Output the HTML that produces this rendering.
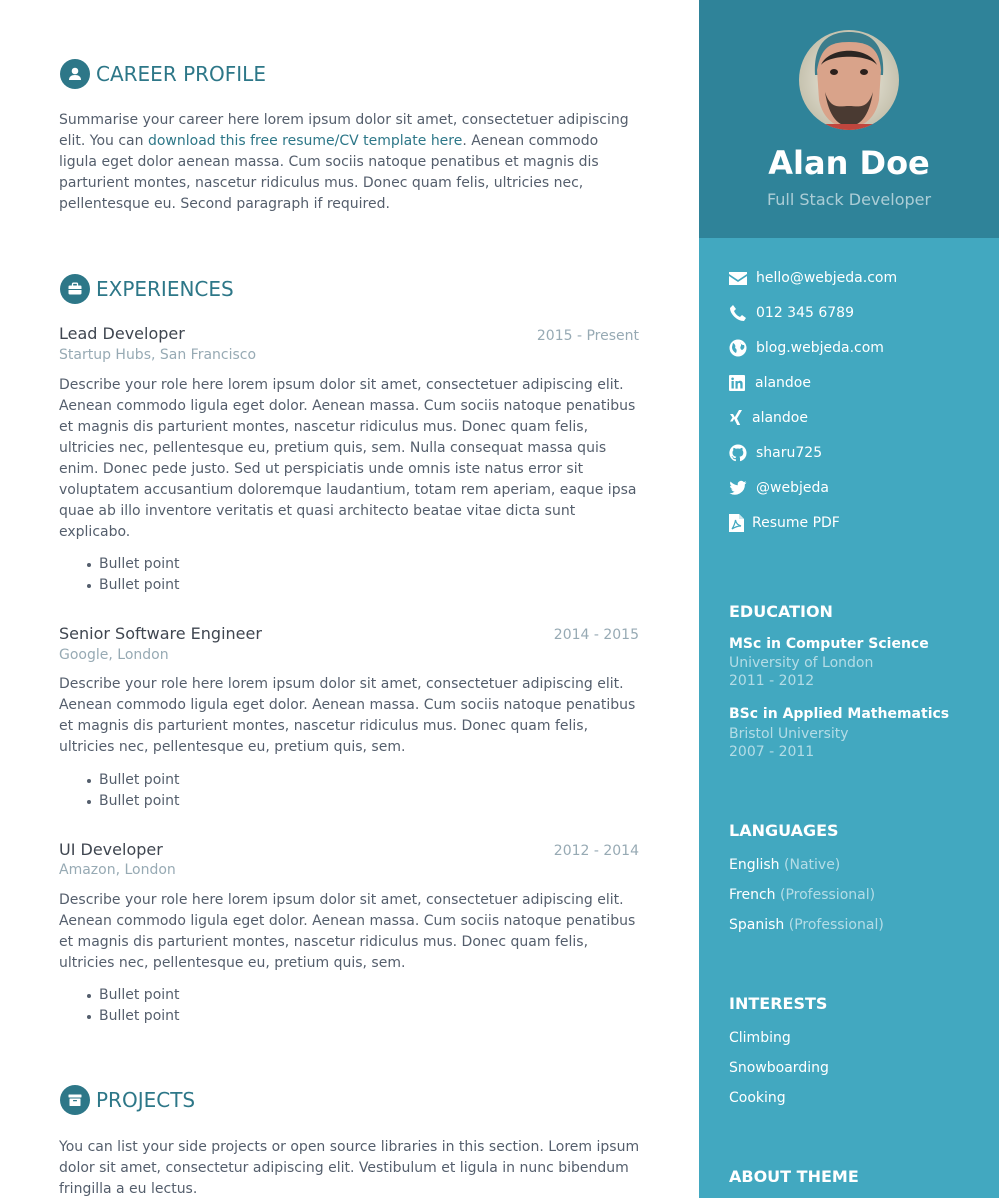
<!DOCTYPE html>
<html><head><meta charset="utf-8">
<style>
*{margin:0;padding:0;box-sizing:border-box}
body{width:1000px;height:1198px;overflow:hidden;background:#fff;font-family:"DejaVu Sans","Liberation Sans",sans-serif;color:#545e6c;position:relative;font-size:14px}
.a{position:absolute;white-space:nowrap}
.p{position:absolute;left:59px;width:582px;line-height:21px;font-size:14px;white-space:normal}
.h{position:absolute;left:60px;height:30px;display:flex;align-items:center;color:#2d7788;font-size:20px}
.h .ic{width:30px;height:30px;border-radius:50%;background:#2d7788;margin-right:6px;display:flex;align-items:center;justify-content:center}
.t{position:absolute;left:59px;font-size:16px;color:#3f4650;line-height:20px}
.c{position:absolute;left:59px;font-size:14px;color:#97aab4;line-height:20px}
.d{position:absolute;right:361px;font-size:14px;color:#97aab4;line-height:20px}
ul{position:absolute;left:99px;line-height:21px;list-style:none}
ul li{position:relative}
ul li:before{content:"";position:absolute;left:-12px;top:9px;width:4px;height:4px;border-radius:50%;background:#545e6c}
a{color:#2d7788;text-decoration:none}
#sb{position:absolute;left:699px;top:0;width:300px;height:1198px;background:#42a8c0;color:#fff}
#hd{position:absolute;left:0;top:0;width:300px;height:238px;background:#2f8399}
.s{position:absolute;left:30px;line-height:20px;font-size:14px;white-space:nowrap}
.sh{position:absolute;left:30px;font-size:16px;font-weight:bold;line-height:20px}
.ci{position:absolute;left:30px;width:18px;height:18px}
.m{color:rgba(255,255,255,.6)}
</style></head><body>

<div class="h" style="top:59px"><div class="ic"><svg width="16" height="16" viewBox="0 0 16 16"><circle cx="8" cy="5" r="3.3" fill="#fff"/><path d="M2 14c0-3.5 2.5-5 6-5s6 1.5 6 5z" fill="#fff"/></svg></div>CAREER PROFILE</div>
<div class="p" style="top:110px;width:574px">Summarise your career here lorem ipsum dolor sit amet, consectetuer adipiscing elit. You can <a>download this free resume/CV template here</a>. Aenean commodo ligula eget dolor aenean massa. Cum sociis natoque penatibus et magnis dis parturient montes, nascetur ridiculus mus. Donec quam felis, ultricies nec, pellentesque eu. Second paragraph if required.</div>

<div class="h" style="top:274px"><div class="ic"><svg width="16" height="16" viewBox="0 0 16 16"><rect x="1.5" y="4.5" width="13" height="9" rx="1.2" fill="#fff"/><rect x="5.5" y="2.2" width="5" height="3" rx=".8" fill="none" stroke="#fff" stroke-width="1.3"/><rect x="1.5" y="8" width="13" height="1" fill="#2d7788"/></svg></div>EXPERIENCES</div>

<div class="t" style="top:324px">Lead Developer</div>
<div class="d" style="top:326px">2015 - Present</div>
<div class="c" style="top:345px">Startup Hubs, San Francisco</div>
<div class="p" style="top:375px">Describe your role here lorem ipsum dolor sit amet, consectetuer adipiscing elit. Aenean commodo ligula eget dolor. Aenean massa. Cum sociis natoque penatibus et magnis dis parturient montes, nascetur ridiculus mus. Donec quam felis, ultricies nec, pellentesque eu, pretium quis, sem. Nulla consequat massa quis enim. Donec pede justo. Sed ut perspiciatis unde omnis iste natus error sit voluptatem accusantium doloremque laudantium, totam rem aperiam, eaque ipsa quae ab illo inventore veritatis et quasi architecto beatae vitae dicta sunt explicabo.</div>
<ul style="top:554px"><li>Bullet point</li><li>Bullet point</li></ul>

<div class="t" style="top:624px">Senior Software Engineer</div>
<div class="d" style="top:625px">2014 - 2015</div>
<div class="c" style="top:645px">Google, London</div>
<div class="p" style="top:674px">Describe your role here lorem ipsum dolor sit amet, consectetuer adipiscing elit. Aenean commodo ligula eget dolor. Aenean massa. Cum sociis natoque penatibus et magnis dis parturient montes, nascetur ridiculus mus. Donec quam felis, ultricies nec, pellentesque eu, pretium quis, sem.</div>
<ul style="top:770px"><li>Bullet point</li><li>Bullet point</li></ul>

<div class="t" style="top:840px">UI Developer</div>
<div class="d" style="top:841px">2012 - 2014</div>
<div class="c" style="top:860px">Amazon, London</div>
<div class="p" style="top:890px">Describe your role here lorem ipsum dolor sit amet, consectetuer adipiscing elit. Aenean commodo ligula eget dolor. Aenean massa. Cum sociis natoque penatibus et magnis dis parturient montes, nascetur ridiculus mus. Donec quam felis, ultricies nec, pellentesque eu, pretium quis, sem.</div>
<ul style="top:985px"><li>Bullet point</li><li>Bullet point</li></ul>

<div class="h" style="top:1085px"><div class="ic"><svg width="16" height="16" viewBox="0 0 16 16"><rect x="1.5" y="2.5" width="13" height="3" rx=".6" fill="#fff"/><rect x="2.5" y="6.5" width="11" height="7.5" rx=".6" fill="#fff"/><rect x="6" y="8" width="4" height="1.3" rx=".6" fill="#2d7788"/></svg></div>PROJECTS</div>
<div class="p" style="top:1137px">You can list your side projects or open source libraries in this section. Lorem ipsum dolor sit amet, consectetur adipiscing elit. Vestibulum et ligula in nunc bibendum fringilla a eu lectus.</div>

<div id="sb">
<div id="hd">
<svg class="a" style="left:100px;top:30px" width="100" height="100" viewBox="0 0 100 100">
<defs><clipPath id="cc"><circle cx="50" cy="50" r="50"/></clipPath><radialGradient id="bg" cx=".5" cy=".5" r=".6"><stop offset="0" stop-color="#f4f1e6"/><stop offset="1" stop-color="#bdb9a4"/></radialGradient></defs>
<g clip-path="url(#cc)">
<rect width="100" height="100" fill="url(#bg)"/>
<path d="M16 45 C14 12 30 2 50 2 C72 2 86 14 84 45 L78 45 L22 45Z" fill="#3b7d8c"/>
<path d="M18 40 C22 18 30 12 50 12 C70 12 80 18 82 40 L80 70 C76 90 62 98 50 98 C38 98 24 90 20 70Z" fill="#d9a38a"/>
<path d="M22 35 C30 16 70 16 78 35 C70 24 30 24 22 35Z" fill="#2b2522"/>
<path d="M26 62 C30 88 40 96 50 96 C60 96 70 88 74 62 C68 80 60 76 50 76 C40 76 32 80 26 62Z" fill="#4a3a32"/>
<ellipse cx="35" cy="42" rx="4" ry="3" fill="#2a201c"/><ellipse cx="65" cy="42" rx="4" ry="3" fill="#2a201c"/>
<rect x="20" y="94" width="60" height="6" fill="#c0463e"/>
</g></svg>
<div class="a" style="left:0;width:300px;text-align:center;top:143px;font-size:32px;font-weight:bold;line-height:40px">Alan Doe</div>
<div class="a m" style="left:0;width:300px;text-align:center;top:190px;font-size:16px;line-height:20px">Full Stack Developer</div>
</div>

<svg class="ci" style="top:269px" viewBox="0 0 18 18"><path d="M0 3h18v2l-9 6-9-6z M0 7l9 6 9-6v9H0z" fill="#fff"/></svg>
<div class="s" style="left:57px;top:268px">hello@webjeda.com</div>
<svg class="ci" style="top:304px" viewBox="0 0 18 18"><path d="M4 1l3 4-2 2c1 2.5 3.5 5 6 6l2-2 4 3-2 3C8 17 1 10 1 4z" fill="#fff"/></svg>
<div class="s" style="left:57px;top:303px">012 345 6789</div>
<svg class="ci" style="top:339px" viewBox="0 0 18 18"><circle cx="9" cy="9" r="8.5" fill="#fff"/><path d="M4 4c2 1 3 3 2 5 2 1 2 3 1 5-2-1-4-3-4-6M12 3c-1 2 1 3 3 3 1 2 0 4-2 5-2-1-2-3-1-4" fill="#42a8c0"/></svg>
<div class="s" style="left:57px;top:338px">blog.webjeda.com</div>
<svg class="ci" style="top:375px;width:16px;height:16px" viewBox="0 0 16 16"><rect width="16" height="16" rx="1" fill="#fff"/><rect x="2.5" y="6" width="2.3" height="7.5" fill="#42a8c0"/><circle cx="3.6" cy="3.8" r="1.3" fill="#42a8c0"/><path d="M6.5 6h2.2v1c.7-1 1.6-1.2 2.5-1.2 1.8 0 2.4 1.2 2.4 3v4.7h-2.3V9.5c0-1-.3-1.6-1.2-1.6-1 0-1.4.7-1.4 1.7v4H6.5z" fill="#42a8c0"/></svg>
<div class="s" style="left:56px;top:373px">alandoe</div>
<svg class="ci" style="top:409px;width:14px" viewBox="0 0 14 18"><path d="M1 5h3l2 3.5-2.5 4H1l2.5-4z M10 1h3L8 9.5l3.2 6.5h-3L5 9.5z" fill="#fff"/></svg>
<div class="s" style="left:53px;top:408px">alandoe</div>
<svg class="ci" style="top:444px" viewBox="0 0 18 18"><path d="M9 .5a8.5 8.5 0 0 0-2.7 16.6c.4 0 .6-.2.6-.4v-1.6c-2.4.5-2.9-1-2.9-1-.4-1-1-1.3-1-1.3-.8-.5 0-.5 0-.5.9 0 1.3.9 1.3.9.8 1.3 2 1 2.5.7 0-.6.3-1 .6-1.2-1.9-.2-3.900-1-3.900-4.200 0-.9.3-1.700.9-2.300-.1-.2-.4-1.100.1-2.300 0 0 .7-.2 2.300.9a8 8 0 0 1 4.200 0c1.600-1.100 2.300-.9 2.300-.9.5 1.200.2 2.100.1 2.300.5.6.9 1.400.9 2.300 0 3.300-2 4-3.900 4.200.3.3.6.8.6 1.600v2.400c0 .2.2.5.6.4A8.5 8.5 0 0 0 9 .5z" fill="#fff"/></svg>
<div class="s" style="left:57px;top:443px">sharu725</div>
<svg class="ci" style="top:479px" viewBox="0 0 18 18"><path d="M17.5 3.5c-.6.3-1.3.5-2 .6.7-.4 1.3-1.1 1.5-1.9-.7.4-1.4.7-2.2.8a3.5 3.5 0 0 0-6 3.2C5.9 6 3.3 4.6 1.6 2.5c-1 1.6-.4 3.6 1 4.6-.5 0-1-.2-1.5-.4 0 1.7 1.2 3.1 2.8 3.4-.5.1-1 .2-1.6.1.5 1.4 1.8 2.4 3.3 2.4A7 7 0 0 1 .5 14.1 10 10 0 0 0 15.9 5.3c.7-.5 1.2-1.1 1.6-1.8z" fill="#fff"/></svg>
<div class="s" style="left:57px;top:478px">@webjeda</div>
<svg class="ci" style="top:514px;width:15px" viewBox="0 0 15 18"><path d="M0 0h10l5 5v13H0z" fill="#fff"/><path d="M10 0v5h5" fill="#cfe9ef"/><path d="M3 15c2-3 3-6 3.5-9 .5 3 2 5 5.5 6-3 0-6 1-9 3z" fill="none" stroke="#42a8c0" stroke-width="1.2"/></svg>
<div class="s" style="left:53px;top:513px">Resume PDF</div>

<div class="sh" style="top:602px">EDUCATION</div>
<div class="s" style="top:634px;font-weight:bold">MSc in Computer Science</div>
<div class="s m" style="top:654px;line-height:18px">University of London<br>2011 - 2012</div>
<div class="s" style="top:704px;font-weight:bold">BSc in Applied Mathematics</div>
<div class="s m" style="top:725px;line-height:18px">Bristol University<br>2007 - 2011</div>

<div class="sh" style="top:821px">LANGUAGES</div>
<div class="s" style="top:855px">English <span class="m">(Native)</span></div>
<div class="s" style="top:885px">French <span class="m">(Professional)</span></div>
<div class="s" style="top:915px">Spanish <span class="m">(Professional)</span></div>

<div class="sh" style="top:994px">INTERESTS</div>
<div class="s" style="top:1028px">Climbing</div>
<div class="s" style="top:1058px">Snowboarding</div>
<div class="s" style="top:1088px">Cooking</div>

<div class="sh" style="top:1167px">ABOUT THEME</div>
</div>
</body></html>
